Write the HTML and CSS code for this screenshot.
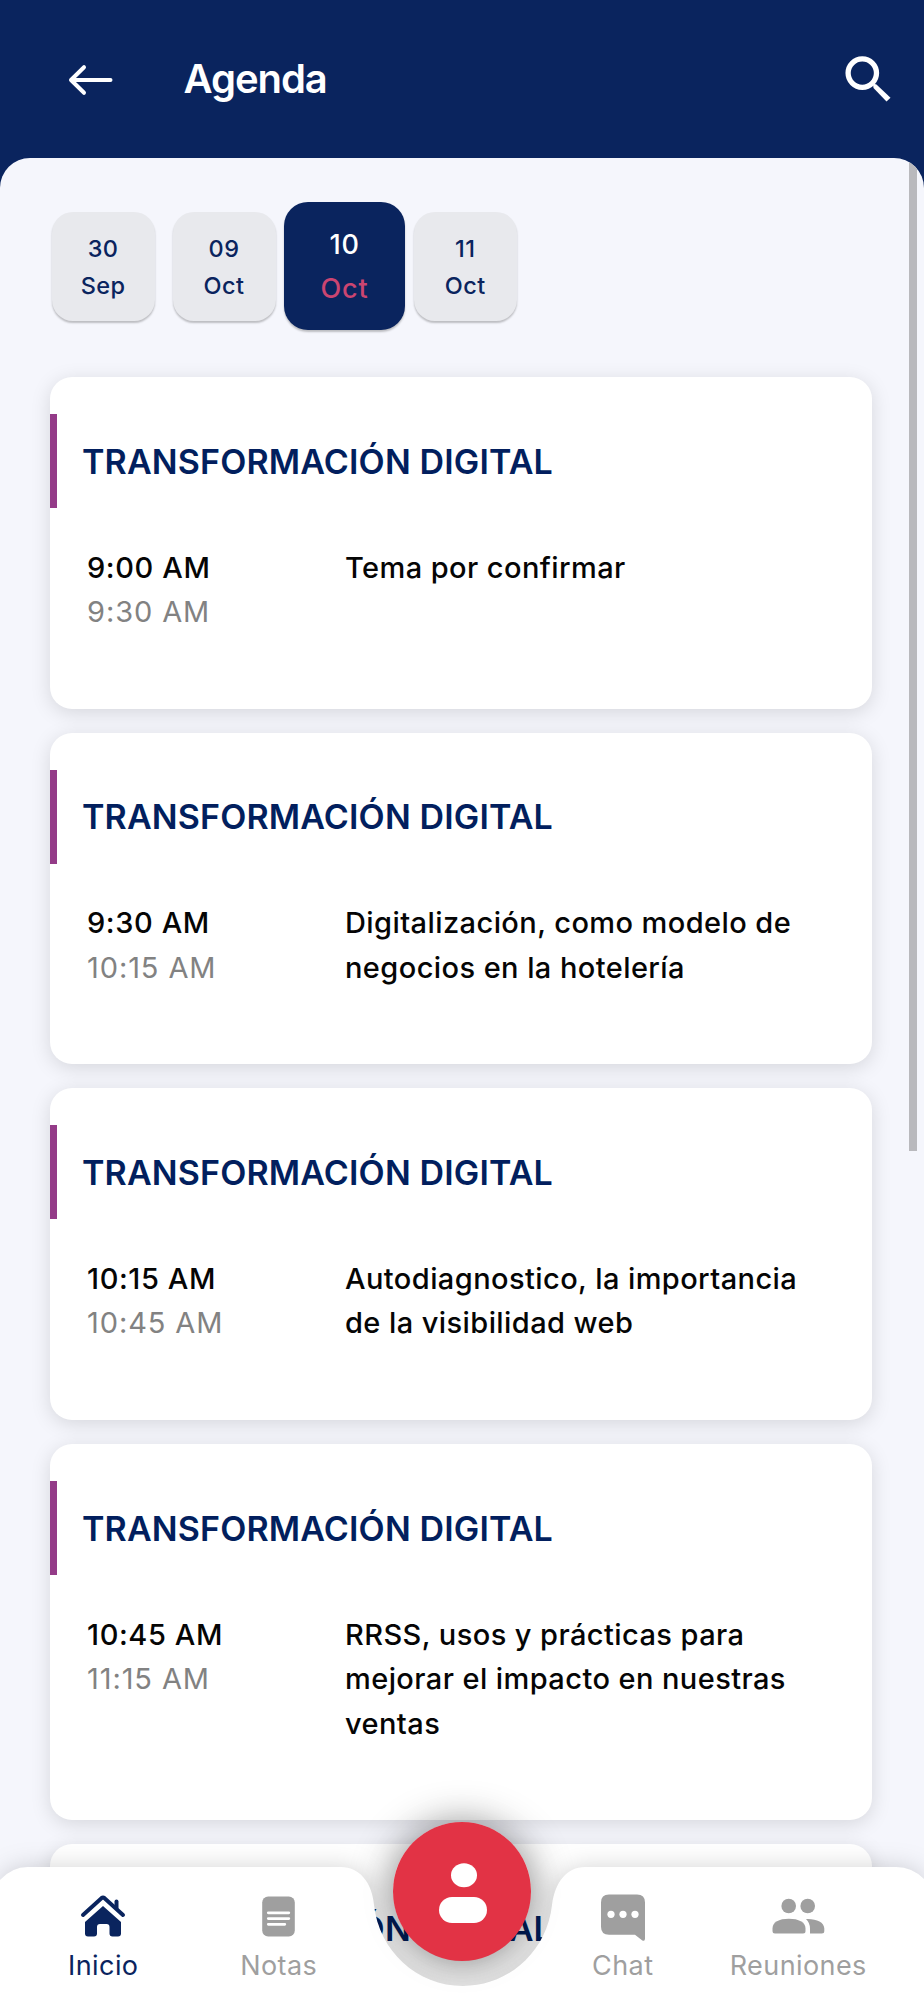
FILE: index.html
```html
<!DOCTYPE html>
<html lang="es">
<head>
<meta charset="utf-8">
<title>Agenda</title>
<link rel="stylesheet" href="styles.css">
</head>
<body>
<div class="app">
  <header class="topbar">
    <svg class="back" width="48" height="34" viewBox="0 0 48 34"><path d="M43.500 17H4M17 4.200L4 17l13 12.800" fill="none" stroke="#fff" stroke-width="4" stroke-linecap="round" stroke-linejoin="round"/></svg>
    <h1 class="heading">Agenda</h1>
    <svg class="search" width="48" height="48" viewBox="0 0 48 48"><circle cx="18.300" cy="18.100" r="14.200" fill="none" stroke="#fff" stroke-width="5.300"/><path d="M29 28.500l3.500 1L46.500 42.700 42.500 46.500 29.500 33z" fill="#fff"/></svg>
  </header>
  <main class="sheet">
    <div class="dates">
      <div class="date"><span>30</span><span>Sep</span></div>
      <div class="date"><span>09</span><span>Oct</span></div>
      <div class="date active"><span>10</span><span class="month">Oct</span></div>
      <div class="date"><span>11</span><span>Oct</span></div>
    </div>
    <div class="cards">
      <article class="card">
        <h2 class="track">TRANSFORMACIÓN DIGITAL</h2>
        <div class="row"><div class="time"><div>9:00 AM</div><div class="end">9:30 AM</div></div><div class="topic">Tema por confirmar</div></div>
      </article>
      <article class="card">
        <h2 class="track">TRANSFORMACIÓN DIGITAL</h2>
        <div class="row"><div class="time"><div>9:30 AM</div><div class="end">10:15 AM</div></div><div class="topic">Digitalización, como modelo de<br>negocios en la hotelería</div></div>
      </article>
      <article class="card">
        <h2 class="track">TRANSFORMACIÓN DIGITAL</h2>
        <div class="row"><div class="time"><div>10:15 AM</div><div class="end">10:45 AM</div></div><div class="topic">Autodiagnostico, la importancia<br>de la visibilidad web</div></div>
      </article>
      <article class="card">
        <h2 class="track">TRANSFORMACIÓN DIGITAL</h2>
        <div class="row"><div class="time"><div>10:45 AM</div><div class="end">11:15 AM</div></div><div class="topic">RRSS, usos y prácticas para<br>mejorar el impacto en nuestras<br>ventas</div></div>
      </article>
      <article class="card">
        <h2 class="track">TRANSFORMACIÓN DIGITAL</h2>
      </article>
    </div>
    <div class="scrollbar"></div>
  </main>
  <div class="fab-shadow"></div>
  <nav class="tabbar">
    <svg class="tabbar-bg" width="924" height="134" viewBox="0 0 924 134"><path d="M0 13Q12 0 28 0H341C359 0 372 15 374 38C379 84 417 119 463 119S547 84 552 38C555 15 567 0 585 0H896Q912 0 924 12V134H0Z" fill="#fff"/></svg>
    <div class="tabs">
      <a class="tab current">
        <svg width="46" height="46" viewBox="0 0 46 46"><path d="M3 22L21.400 5.200Q23 4 24.600 5.200L43 22" fill="none" stroke="currentColor" stroke-width="4" stroke-linecap="round"/><path d="M36.500 15V8.500" stroke="currentColor" stroke-width="4" stroke-linecap="round"/><path d="M23 13L41 29V40.500Q41 43.500 38 43.500H32.500Q29.500 43.500 29.500 40.500V34Q29.500 31 26.500 31H20Q17 31 17 34V40.500Q17 43.500 14 43.500H8Q5 43.500 5 40.500V29Z" fill="currentColor"/></svg>
        <span>Inicio</span>
      </a>
      <a class="tab">
        <svg width="46" height="46" viewBox="0 0 46 46"><rect x="6.200" y="3.500" width="32.600" height="40" rx="6" fill="currentColor"/><path d="M12.300 19.800H32.800M12.300 25.600H32.800M12.300 31.300H28.800" stroke="#fff" stroke-width="2.800" stroke-linecap="round"/></svg>
        <span>Notas</span>
      </a>
      <div></div>
      <a class="tab">
        <svg width="46" height="50" viewBox="0 0 46 50"><path d="M9 1.500H37Q45 1.500 45 9.500V45.500Q45 49 42 47.300L35 41.700H9Q1 41.700 1 33.700V9.500Q1 1.500 9 1.500Z" fill="currentColor"/><g fill="#fff"><circle cx="11" cy="21.300" r="3.600"/><circle cx="23" cy="21.300" r="3.600"/><circle cx="35" cy="21.300" r="3.600"/></g></svg>
        <span>Chat</span>
      </a>
      <a class="tab">
        <svg width="54" height="46" viewBox="0 0 54 46"><g fill="currentColor"><circle cx="17.700" cy="13" r="7.300"/><circle cx="36.700" cy="13" r="7.300"/><path d="M1.500 35.500C1.500 29 8 25.700 17.800 25.700S34.500 29 34.500 35.500V38Q34.500 40.500 32 40.500H4Q1.500 40.500 1.500 38Z"/><path d="M35 26C45 25.500 53.300 29 53.300 35.500V38Q53.300 40.500 50.800 40.500H39V35.500Q39 30 35 26Z"/></g></svg>
        <span>Reuniones</span>
      </a>
    </div>
    <div class="fab"><svg width="48" height="60" viewBox="0 0 48 60"><ellipse cx="25" cy="12.200" rx="13" ry="12" fill="#fff"/><rect x="0" y="34" width="48" height="26" rx="13" fill="#fff"/></svg></div>
  </nav>
</div>
</body>
</html>
```
FILE: styles.css
```css
* { box-sizing: border-box; }
body { margin: 0; font-family: Inter, "Liberation Sans", sans-serif; }
.app { position: relative; width: 924px; height: 2000px; overflow: hidden; background: #0a245e; }

.topbar { display: flex; align-items: center; height: 157.500px; padding-left: 67px; }
.back { margin-top: 2px; }
.heading { margin: 0 0 0 68.500px; font-size: 40px; line-height: 50px; font-weight: 600; letter-spacing: -1.050px; color: #fff; }
.search { margin-left: auto; margin-right: 32.500px; }

.sheet { position: relative; height: 1843px; overflow: hidden; padding: 44px 52px 0 50px; background: #f5f6fc; border-radius: 30px 30px 0 0; }
.dates { display: flex; align-items: center; height: 129px; padding-left: 1.500px; }
.date { display: flex; flex-direction: column; align-items: center; justify-content: center; width: 103px; height: 109px; margin-right: 18px; padding-top: 2px; border-radius: 21px; background: #e8e9ed; box-shadow: 0 2px 2px rgba(0, 0, 0, .23); color: #0a245e; font-size: 23.500px; line-height: 37.300px; font-weight: 500; letter-spacing: .4px; }
.date.active { width: 121px; height: 128.500px; margin: 0 8.700px 0 -9.500px; padding-top: 2px; border-radius: 24px; background: #0a245e; color: #fff; font-size: 27px; line-height: 44.500px; letter-spacing: .8px; }
.date.active .month { color: #cb4571; }

.cards { display: flex; flex-direction: column; gap: 24.200px; margin-top: 46.500px; }
.card { padding: 37px 0 74px; border-radius: 22px; background: #fff; box-shadow: 0 4px 20px rgba(0, 0, 0, .13); }
.track { display: flex; align-items: center; height: 94px; margin: 0; padding-left: 25px; border-left: 7.500px solid #943b88; color: #021f5e; font-size: 34px; font-weight: 600; letter-spacing: .15px; white-space: nowrap; }
.row { display: flex; padding: 37.500px 0 0 37px; font-size: 29px; line-height: 44.500px; font-weight: 500; color: #050505; }
.time { width: 258px; letter-spacing: .6px; }
.end { color: #828282; font-weight: 400; letter-spacing: .9px; }
.topic { white-space: nowrap; letter-spacing: .42px; }
.scrollbar { position: absolute; top: 4px; right: 7.500px; width: 7.500px; height: 989px; background: #b9b9bd; }

.fab-shadow { position: absolute; left: 393px; top: 1822px; width: 138px; height: 138px; border-radius: 50%; box-shadow: 0 4px 44px rgba(0, 0, 0, .46); }
.tabbar { position: absolute; left: 0; bottom: 0; width: 924px; height: 133.500px; color: #9f9f9f; }
.tabbar-bg { position: absolute; left: 0; top: 0; filter: drop-shadow(0 0 12px rgba(0, 0, 0, .17)); }
.tabs { position: relative; display: grid; grid-template-columns: 175.500px 175.500px 168.500px 175.500px 175.500px; padding: 26px 0 0 15.500px; }
.tab { display: flex; flex-direction: column; align-items: center; height: 100px; font-size: 27px; line-height: 36px; letter-spacing: .42px; }
.tab svg { display: block; margin-bottom: auto; }
.tab span { margin-bottom: 9px; }
.current { color: #0a245e; }
.fab { position: absolute; left: 393.300px; top: -44.500px; display: flex; justify-content: center; width: 138px; height: 138.500px; padding: 41px 0 0 2px; border-radius: 50%; background: #e23345; box-shadow: 0 2px 38px rgba(0, 0, 0, .09); }
```
